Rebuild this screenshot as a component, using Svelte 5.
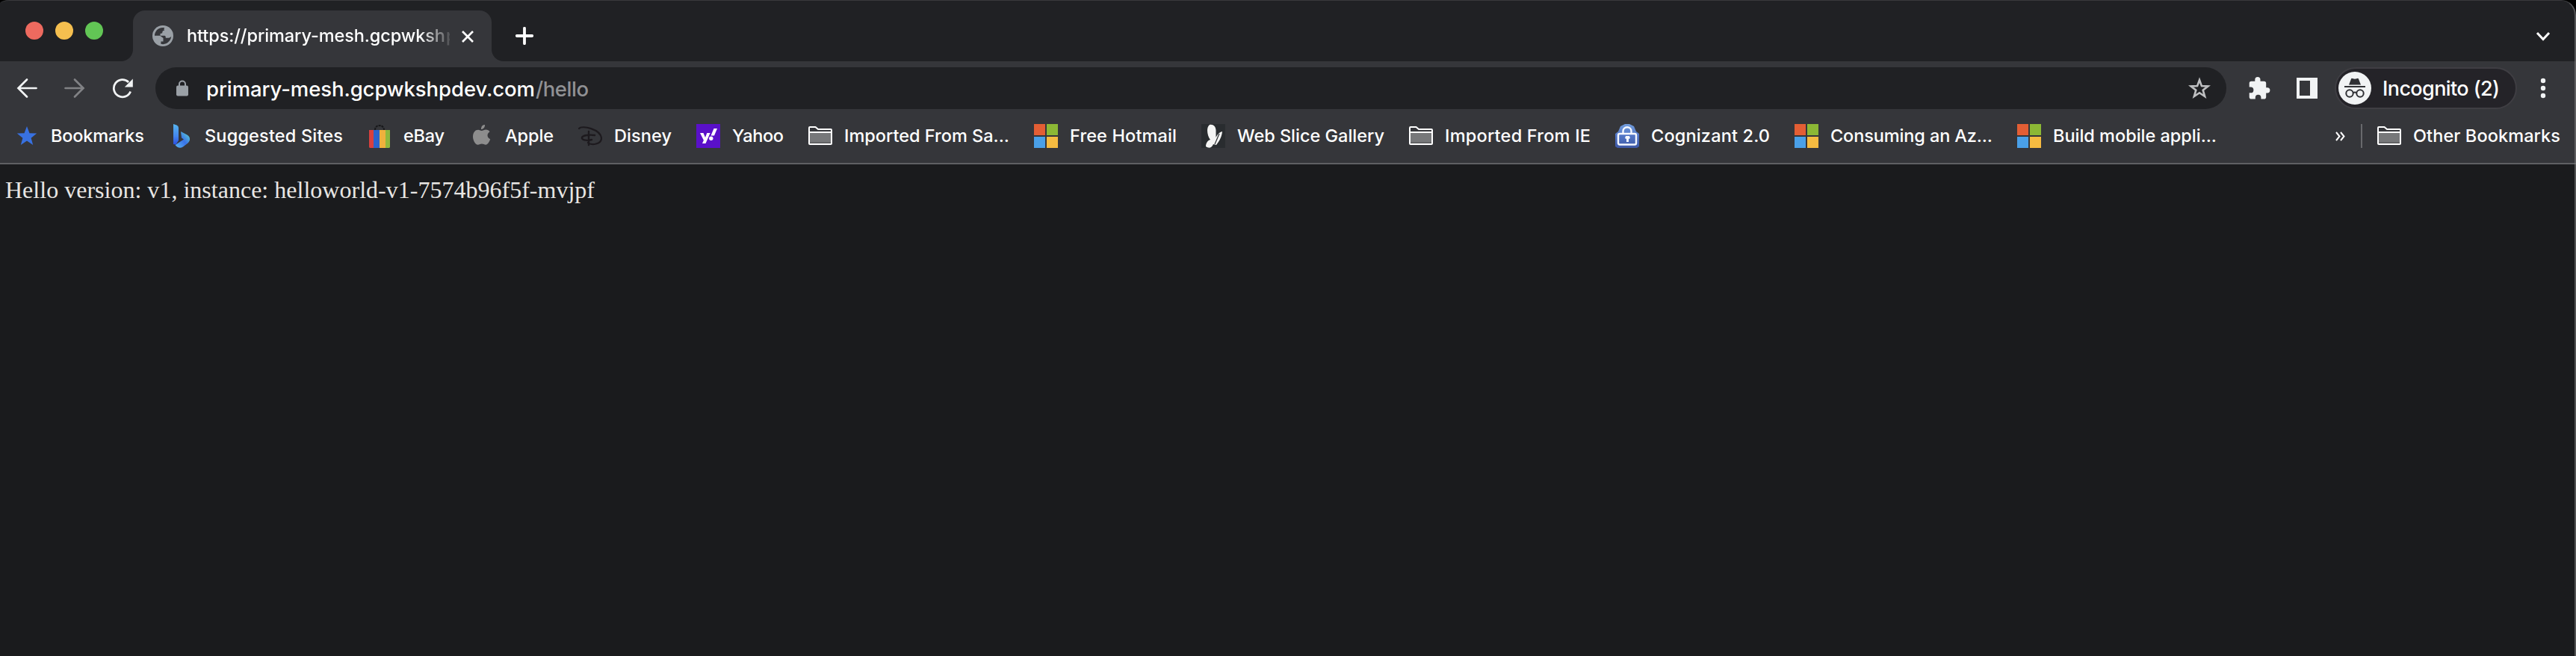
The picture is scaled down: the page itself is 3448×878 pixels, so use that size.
<script>
  const bookmarks = [
    { icon: 'star', label: 'Bookmarks', width: 126 },
    { icon: 'bing', label: 'Suggested Sites', width: 186 },
    { icon: 'ebay', label: 'eBay', width: 56 },
    { icon: 'apple', label: 'Apple', width: 66 },
    { icon: 'disney', label: 'Disney', width: 78 },
    { icon: 'yahoo', label: 'Yahoo', width: 70 },
    { icon: 'folder', label: 'Imported From Sa...', width: 222 },
    { icon: 'microsoft', label: 'Free Hotmail', width: 144 },
    { icon: 'butterfly', label: 'Web Slice Gallery', width: 198 },
    { icon: 'folder', label: 'Imported From IE', width: 196 },
    { icon: 'lock', label: 'Cognizant 2.0', width: 160 },
    { icon: 'microsoft', label: 'Consuming an Az...', width: 218 },
    { icon: 'microsoft', label: 'Build mobile appli...', width: 220 }
  ];

  // Tracks a label out (or in) so that its glyphs fill the given width.
  function fit(node, width) {
    const natural = node.getBoundingClientRect().width;
    node.style.letterSpacing = `${(width - 1 - natural) / (node.textContent.length - 1)}px`;
    node.style.width = `${width}px`;
  }
</script>

{#snippet favicon(name)}
  <svg class="favicon" viewBox="0 0 32 32">
    {#if name === 'star'}
      <path fill="#3871e0" d="M16 3l3.500 9.200 9.700.4-7.600 6.100 2.600 9.200L16 22.600l-8.200 5.300 2.600-9.200-7.600-6.100 9.700-.4z" />
    {:else if name === 'bing'}
      <defs>
        <linearGradient id="bing-stem" x1="0" y1="0" x2="0" y2="1"><stop offset="0" stop-color="#57b5ee" /><stop offset=".6" stop-color="#4385ed" /><stop offset="1" stop-color="#2b4fe0" /></linearGradient>
        <linearGradient id="bing-bowl" x1="0" y1="1" x2="1" y2="0"><stop offset="0" stop-color="#58b9f5" /><stop offset=".5" stop-color="#3972e8" /><stop offset="1" stop-color="#62dfd0" /></linearGradient>
      </defs>
      <path fill="url(#bing-bowl)" d="M16 10l8.500 4.500c4.600 2.700 4.500 8 1 11l-6.500 5c-4 2.500-8 1-10.500-2.500L20 20.500l-3-2z" />
      <path fill="url(#bing-stem)" d="M6 0l4.500 1.500Q13 2.500 13 5v17l-3.500 5.500L6 27z" />
    {:else if name === 'ebay'}
      <path fill="none" stroke="#17181a" stroke-width="2" stroke-dasharray="3 1" d="M10 8c0-8 12-8 12 0" />
      <path fill="#d8403d" d="M2 8h6v24H3l-1-1z" />
      <path fill="#2b63cb" d="M8 8h8v24H8z" />
      <path fill="#efb13d" d="M16 8h8v24h-8z" />
      <path fill="#8fb83c" d="M24 8h6v23l-1 1h-5z" />
    {:else if name === 'apple'}
      <path fill="#8d8d8d" d="M16 7c0-4 2-6 5-6 .2 3.500-2 6-5 6zM16.500 9c2 0 3.500-1.500 6-1.500 2 0 4 1 5 2.800-4.300 2.700-3.700 8.200.7 9.900-1 3-3.500 7.500-6 7.500-2 0-3-1.200-5.300-1.200s-3.200 1.200-5.200 1.200C8 27.700 5 21.500 5 17c0-6 3.300-9.300 7-9.300 2 0 3.500 1.300 4.500 1.300z" />
    {:else if name === 'disney'}
      <g fill="none" stroke="#1d1a1e" stroke-linecap="round">
        <path stroke-width="2.200" d="M1 6c4-5 29 1 30 13 0 8-13 10-18 6" />
        <path stroke-width="2.400" d="M14 10v18M22 15c-7-1-16 0-17 3s5 5 13 3" />
      </g>
    {:else if name === 'yahoo'}
      <path fill="#5a10c9" d="M0 0h32v32H0z" />
      <path fill="#fff" d="M5 12h4.500l2.500 6 2.300-6h4.300L12.500 26H8l1.900-4.300zM23.500 6H28l-4 9.500h-4.500z" />
      <circle cx="19.800" cy="19.200" r="2.700" fill="#fff" />
    {:else if name === 'folder'}
      <path fill="#77787a" d="M2 11h28v16H2z" />
      <path fill="#616264" d="M2 24h28v2H2z" />
      <path fill="none" stroke="#fff" stroke-width="2" stroke-linejoin="round" d="M1 5q0-1 1-1h7.500l3.500 3h17q1 0 1 1V26q0 1-1 1H2q-1 0-1-1zM1 11h30" />
    {:else if name === 'microsoft'}
      <path fill="#e35e34" d="M0 0h15v15H0z" />
      <path fill="#8cb835" d="M17 0h15v15H17z" />
      <path fill="#4aa0e8" d="M0 17h15v15H0z" />
      <path fill="#f6bb41" d="M17 17h15v15H17z" />
    {:else if name === 'butterfly'}
      <path fill="#292c2f" d="M0 0h32v32H0z" />
      <path fill="#f5f5f4" d="M11 1c5-1 8 2 8.500 7v10c1.500-3 4-7 8.500-8-.5 7-4 13-8 18l-4-1c-2 5-6 6-10 3 0-4 2-8 6-9-4-5-6-16-1-20z" />
      <path fill="none" stroke="#292c2f" stroke-width="1.200" d="M24 13l-6 14" />
    {:else if name === 'lock'}
      <defs><linearGradient id="lock-ground" x1="0" y1="0" x2="0" y2="1"><stop offset="0" stop-color="#729ddb" /><stop offset=".5" stop-color="#5175c5" /><stop offset="1" stop-color="#3e58a5" /></linearGradient></defs>
      <path fill="url(#lock-ground)" d="M13 0h6l6 3 3 7 4 3v17l-3 2H3l-3-2V13l4-3 3-7z" />
      <path fill="none" stroke="#f5f8ff" stroke-width="2.400" d="M10.500 13V9.500c0-7 11-7 11 0V13M6 13h20q2 0 2 2v10.500q0 2-2 2H6q-2 0-2-2V15q0-2 2-2z" />
      <path fill="#f5f8ff" d="M14 16h5l1 3-2 1v4h-3v-4l-2-1z" />
    {/if}
  </svg>
{/snippet}

<div class="browser">
  <header class="tabs">
    <div class="lights"><i class="red"></i><i class="yellow"></i><i class="green"></i></div>
    <div class="tab">
      <svg class="globe" viewBox="0 0 28 28">
        <circle cx="14" cy="14" r="14" fill="#9aa0a6" />
        <path fill="#35363a" d="M16.200 3.200c-1 1.500-.8 2.700 0 3.500-2 .2-3 1-2.900 2.900 0 1-.8 1.300-2.800 1.300v2.900h5.600c1.700 0 1.700 1.400 1.700 3h3.500c1.600 0 3.200-.7 3.900-2.200C25 20 20 25.200 14.400 25.200c-1.500 0-2.800-.2-3.900-.7v-3.800h2.700v-4.200c-1-.1-1.300-.7-1.300-1.600H3c-.7-7 5.500-13.200 13.200-11.700z" />
        <path fill="#9aa0a6" d="M3 13.800h7.200l4.300 3.300v4.300h-3.100v3.800C6.500 24 3 19.400 3 13.800z" />
      </svg>
      <div class="title"><span use:fit={347}>https://primary-mesh.gcpwksh</span><span>p</span></div>
      <svg class="close" viewBox="0 0 18 18"><path d="M2 2l14 14M16 2L2 16" fill="none" stroke="#fff" stroke-width="2.700" /></svg>
    </div>
    <svg class="plus" viewBox="0 0 24 24"><path d="M12 1.800v20.400M1.800 12h20.400" fill="none" stroke="#fff" stroke-width="3.800" stroke-linecap="round" /></svg>
    <svg class="chevron" viewBox="0 0 20 14"><path d="M2 2l8 8.500L18 2" fill="none" stroke="#fff" stroke-width="3" /></svg>
  </header>

  <div class="toolbar">
    <svg class="nav" viewBox="0 0 28 28"><path d="M14 2.500L2.500 14 14 25.500M3 14h23.500" fill="none" stroke="#f1f3f4" stroke-width="2.700" stroke-linecap="round" /></svg>
    <svg class="nav forward" viewBox="0 0 28 28"><path d="M14 2.500L25.500 14 14 25.500M25 14H1.500" fill="none" stroke="#818285" stroke-width="2.700" stroke-linecap="round" /></svg>
    <svg class="nav reload" viewBox="0 0 28 28"><path d="M24.700 18.500a11.600 11.600 0 1 1-2.600-12.600" fill="none" stroke="#f1f3f4" stroke-width="2.800" /><path fill="#f1f3f4" d="M27.800 1.500v11H16.800z" /></svg>
    <div class="omnibox">
      <svg class="padlock" viewBox="0 0 16 22"><rect y="7.500" width="16" height="14" rx="2" fill="#9aa0a6" /><path d="M4 8V5.500a4 4 0 0 1 8 0V8" fill="none" stroke="#9aa0a6" stroke-width="2" /></svg>
      <div class="url"><span use:fit={441}>primary-mesh.gcpwkshpdev.com</span><span class="path" use:fit={72}>/hello</span></div>
      <svg class="fave" viewBox="0 0 30 30"><path d="M15 4l2.900 8.100 8.600.3-6.800 5.300 2.400 8.300L15 21.200 7.900 26l2.400-8.300-6.800-5.300 8.600-.3z" fill="none" stroke="#bfc0c2" stroke-width="2.600" /></svg>
    </div>
    <svg class="puzzle" viewBox="0 0 30 30"><path fill="#f1f3f4" d="M24.800 14.200h-1.600V8.500q0-2.800-2.800-2.800h-4.900V3.700a3.600 3.600 0 0 0-7.200 0v2H3.500Q.7 5.700.7 8.500v5h1.800a3.900 3.900 0 0 1 0 7.800H.7v5.400q0 2.800 2.800 2.800h5.300v-2a3.800 3.800 0 0 1 7.600 0v2h4q2.800 0 2.800-2.800v-5.300h1.600a3.600 3.600 0 0 0 0-7.200z" /></svg>
    <svg class="panel" viewBox="0 0 28 28"><path fill="#f1f3f4" fill-rule="evenodd" d="M0 0h28v28H0zM4 4v20h14V4z" /></svg>
    <div class="profile">
      <svg class="incognito" viewBox="0 0 44 44">
        <circle cx="22" cy="22" r="22" fill="#f1f3f4" />
        <path fill="#303135" d="M14 17.500l3-7.800q.4-1.200 1.600-.8l3.400.9 3.400-.9q1.200-.4 1.600.8l3 7.800zM8 19h28v2H8z" />
        <g fill="none" stroke="#303135" stroke-width="2"><circle cx="15" cy="29" r="4.700" /><circle cx="29" cy="29" r="4.700" /><path d="M19.500 28.500q2.500-1.800 5 0" /></g>
      </svg>
      <span use:fit={158}>Incognito (2)</span>
    </div>
    <svg class="dots" viewBox="0 0 8 28"><circle cx="4" cy="4" r="3.200" /><circle cx="4" cy="14" r="3.200" /><circle cx="4" cy="24" r="3.200" /></svg>
  </div>

  <nav class="bookmarks">
    {#each bookmarks as b}
      <div class="bookmark">{@render favicon(b.icon)}<span use:fit={b.width}>{b.label}</span></div>
    {/each}
    <svg class="more" viewBox="0 0 13 13"><path d="M1 1l4.500 5.500L1 12M7 1l4.500 5.500L7 12" fill="none" stroke="#fff" stroke-width="2" /></svg>
    <div class="divider"></div>
    <div class="bookmark">{@render favicon('folder')}<span use:fit={198}>Other Bookmarks</span></div>
  </nav>

  <main><span use:fit={790}>Hello version: v1, instance: helloworld-v1-7574b96f5f-mvjpf</span></main>
  <div class="frame"></div>
</div>

<style>
  :global(body) { background: #000; }
  .browser {
    position: relative;
    width: 3448px;
    height: 878px;
    overflow: hidden;
    display: flex;
    flex-direction: column;
    border-radius: 13px 20px 0 0 / 5px 20px 0 0;
    background: #1a1b1d;
    color: #fff;
    font: 450 23.500px/32px Inter, sans-serif;
    white-space: pre;
  }
  .browser * { box-sizing: border-box; }
  svg { display: block; flex: none; }
  span { display: block; flex: none; }
  .frame {
    position: absolute;
    inset: 0;
    border-right: 2px solid rgba(130, 130, 130, .55);
    border-top: 1px solid rgba(130, 130, 130, .25);
    border-radius: 13px 20px 0 0 / 5px 20px 0 0;
    pointer-events: none;
  }

  .tabs { height: 82px; background: #202124; display: flex; align-items: flex-start; flex: none; }
  .lights { display: flex; gap: 16px; padding: 29px 0 0 34px; width: 178px; }
  .lights i { width: 24px; height: 24px; border-radius: 50%; }
  .red { background: #ed6a5f; }
  .yellow { background: #f5bf4f; }
  .green { background: #62c655; }
  .tab {
    position: relative;
    width: 480px;
    height: 68px;
    margin-top: 14px;
    padding: 0 22px 0 26px;
    display: flex;
    align-items: center;
    background: #35363a;
    border-radius: 16px 16px 0 0;
  }
  .tab::before, .tab::after {
    content: '';
    position: absolute;
    bottom: 0;
    width: 16px;
    height: 16px;
  }
  .tab::before { left: -16px; background: radial-gradient(circle at 0 0, transparent 15.500px, #35363a 16.500px); }
  .tab::after { right: -16px; background: radial-gradient(circle at 100% 0, transparent 15.500px, #35363a 16.500px); }
  .globe { width: 28px; height: 28px; }
  .title {
    width: 352px;
    margin-left: 18px;
    display: flex;
    overflow: hidden;
    mask-image: linear-gradient(90deg, #000 312px, transparent 358px);
  }
  .close { width: 18px; height: 18px; margin: 1px 0 0 15px; }
  .plus { width: 24px; height: 24px; margin: 36px 0 0 32px; }
  .chevron { width: 20px; height: 14px; margin: 42px 34px 0 auto; }

  .toolbar { height: 72px; padding: 8px 40px 8px 22px; background: #35363a; display: flex; align-items: center; flex: none; }
  .nav { width: 28px; height: 28px; }
  .forward, .reload { margin-left: 36px; }
  .omnibox {
    width: 2772px;
    height: 56px;
    margin-left: 30px;
    padding: 0 21px 0 28px;
    border-radius: 28px;
    background: #202124;
    display: flex;
    align-items: center;
    font-size: 27.500px;
  }
  .padlock { width: 16px; height: 22px; }
  .url { display: flex; margin-left: 24px; padding-top: 1px; }
  .path { color: #909194; }
  .fave { width: 30px; height: 30px; margin-left: auto; }
  .puzzle { width: 30px; height: 30px; margin-left: 30px; }
  .panel { width: 28px; height: 28px; margin-left: 34px; }
  .profile {
    width: 244px;
    height: 56px;
    margin-left: 23px;
    padding-left: 3px;
    display: flex;
    align-items: center;
    gap: 15px;
    border: 2px solid #3f3e43;
    border-radius: 28px;
    background: #242328;
    font-size: 27px;
  }
  .incognito { width: 44px; height: 44px; }
  .profile span { padding-top: 1px; }
  .dots { width: 8px; height: 28px; margin-left: auto; fill: #f1f3f4; }

  .bookmarks {
    height: 66px;
    padding: 0 20px 8px;
    background: #35363a;
    border-bottom: 2px solid #5f6063;
    display: flex;
    align-items: center;
    gap: 32px;
    flex: none;
  }
  .bookmark { display: flex; align-items: center; gap: 16px; flex: none; }
  .favicon { width: 32px; height: 32px; }
  .more { width: 13px; height: 13px; margin: 0 1px 0 auto; }
  .divider { width: 2px; height: 32px; margin: 0 -12px; background: #68696c; }

  main { display: flex; padding: 14px 0 0 7px; color: #e8e6e3; font: 32px/40px "Liberation Serif", serif; }
</style>
